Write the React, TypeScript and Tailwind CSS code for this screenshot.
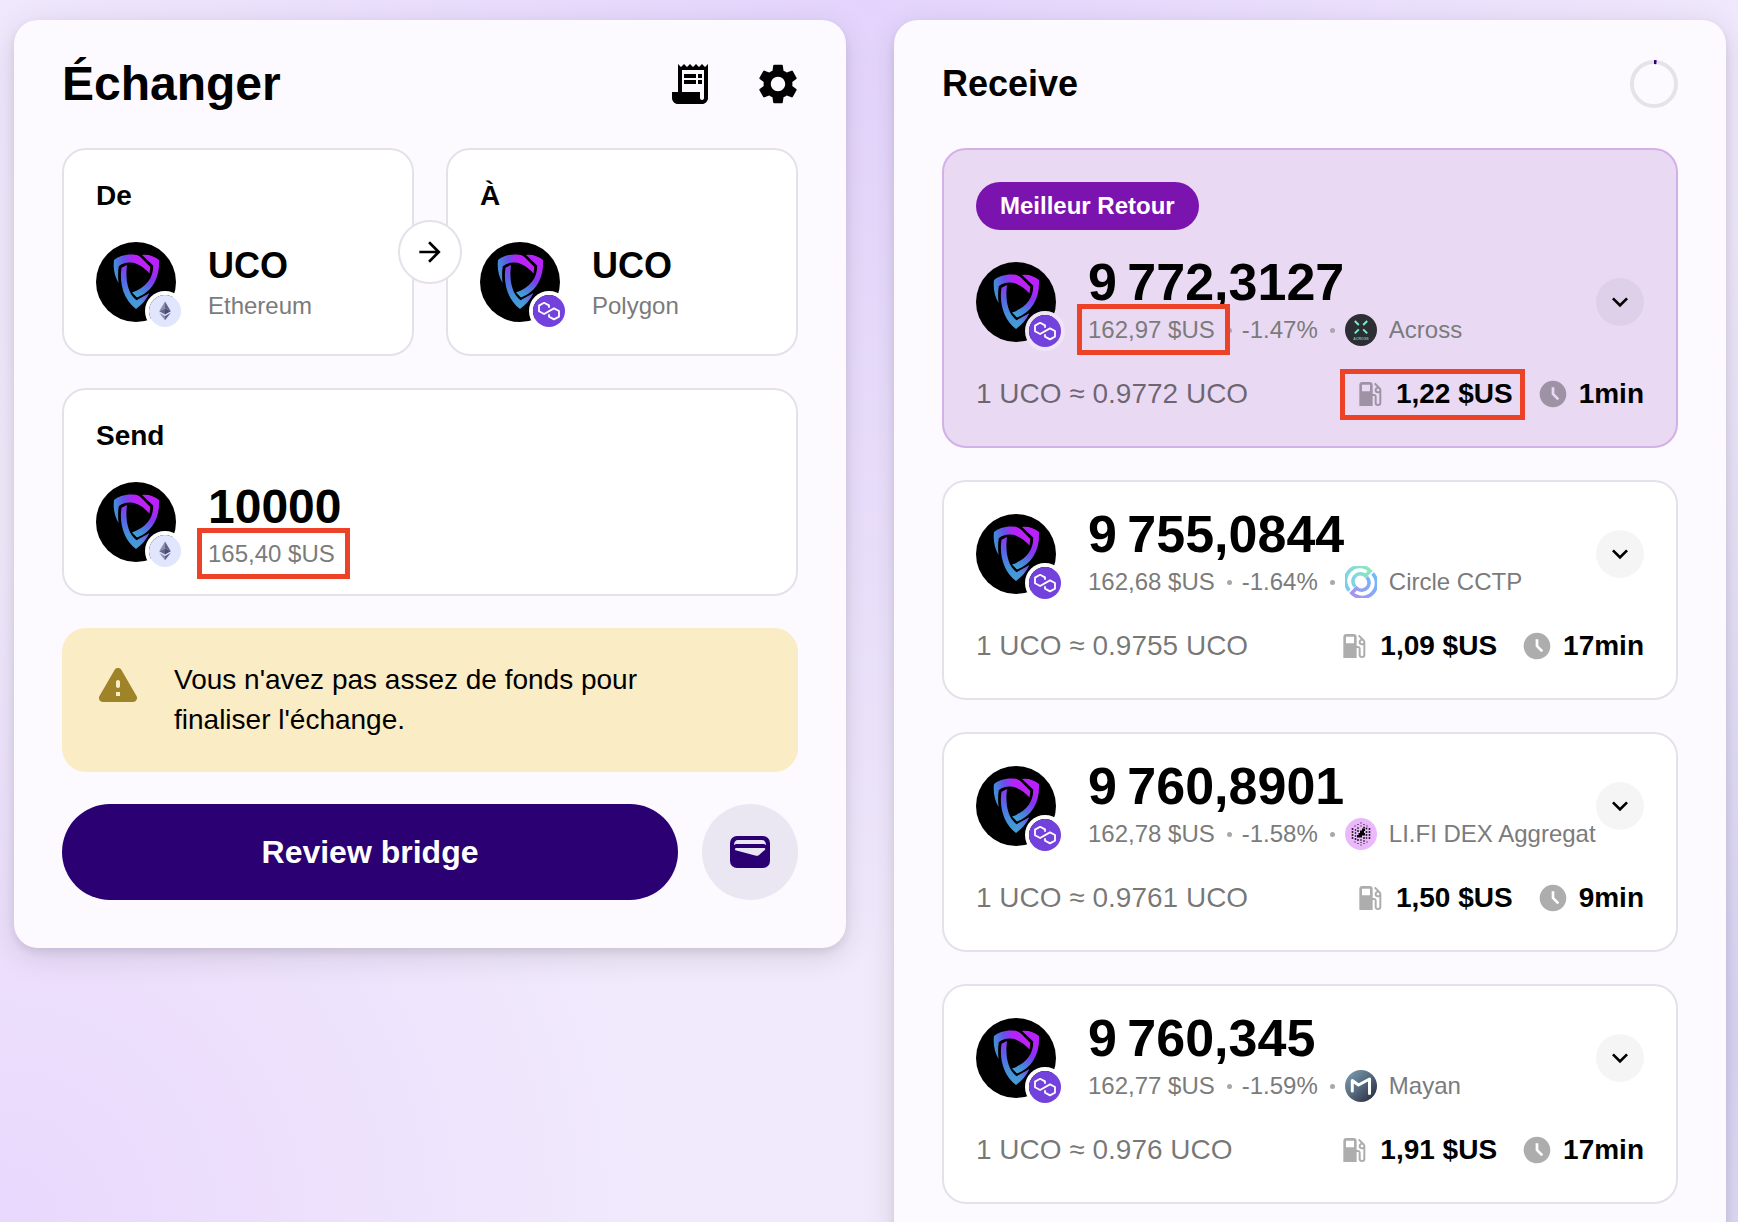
import React, { useState } from "react";
import {
  MdAccessTimeFilled,
  MdArrowForward,
  MdKeyboardArrowDown,
  MdLocalGasStation,
  MdReceiptLong,
  MdSettings,
} from "react-icons/md";

type Network = "ethereum" | "polygon";
type Provider = "across" | "circle" | "lifi" | "mayan";

interface Route {
  amount: string;
  fiat: string;
  change: string;
  provider: Provider;
  name: string;
  rate: string;
  gas: string;
  time: string;
  best?: boolean;
}

const routes: Route[] = [
  { amount: "9\u202f772,3127", fiat: "162,97 $US", change: "-1.47%", provider: "across", name: "Across", rate: "0.9772", gas: "1,22 $US", time: "1min", best: true },
  { amount: "9\u202f755,0844", fiat: "162,68 $US", change: "-1.64%", provider: "circle", name: "Circle CCTP", rate: "0.9755", gas: "1,09 $US", time: "17min" },
  { amount: "9\u202f760,8901", fiat: "162,78 $US", change: "-1.58%", provider: "lifi", name: "LI.FI DEX Aggregator", rate: "0.9761", gas: "1,50 $US", time: "9min" },
  { amount: "9\u202f760,345", fiat: "162,77 $US", change: "-1.59%", provider: "mayan", name: "Mayan", rate: "0.976", gas: "1,91 $US", time: "17min" },
];

function NetworkIcon({ network }: { network: Network }) {
  if (network === "ethereum") {
    return (
      <svg viewBox="0 0 32 32" className="block size-8">
        <circle cx="16" cy="16" r="16" fill="#e1e5fe" />
        <path d="M16 6.5L10.2 16.2 16 13.5z" fill="#8b8fb0" />
        <path d="M16 6.5L21.8 16.2 16 13.5z" fill="#5f6388" />
        <path d="M10.2 16.2L16 13.5V19.6z" fill="#62668f" />
        <path d="M21.8 16.2L16 13.5V19.6z" fill="#454a75" />
        <path d="M10.2 17.7L16 21V25.3z" fill="#8b8fb0" />
        <path d="M21.8 17.7L16 21V25.3z" fill="#5f6388" />
      </svg>
    );
  }
  return (
    <svg viewBox="0 0 32 32" className="block size-8">
      <circle cx="16" cy="16" r="16" fill="#7342dc" />
      <path
        d="M16 12.8V10.4L11.1 7.8L6 10.6V16.2L11.1 19L21 13.4L26 16V21.6L21 24.4L16 21.6V19.2"
        fill="none"
        stroke="#fff"
        strokeWidth="1.8"
        strokeLinejoin="round"
      />
    </svg>
  );
}

function TokenAvatar({ network, best }: { network: Network; best?: boolean }) {
  const id = React.useId();
  return (
    <div className="relative size-20 shrink-0">
      <svg viewBox="0 0 80 80" className="block size-20">
        <defs>
          <linearGradient id={id + "a"} gradientUnits="userSpaceOnUse" x1="17" y1="30" x2="54" y2="24">
            <stop offset="0.05" stopColor="#4292d6" />
            <stop offset="0.35" stopColor="#6650ea" />
            <stop offset="0.6" stopColor="#b822fb" />
            <stop offset="1" stopColor="#bf22f5" />
          </linearGradient>
          <linearGradient id={id + "b"} gradientUnits="userSpaceOnUse" x1="58" y1="16" x2="39" y2="54">
            <stop offset="0.2" stopColor="#b722fa" />
            <stop offset="0.5" stopColor="#8038f2" />
            <stop offset="0.8" stopColor="#4686dc" />
            <stop offset="1" stopColor="#45a4d6" />
          </linearGradient>
          <linearGradient id={id + "c"} gradientUnits="userSpaceOnUse" x1="28" y1="20" x2="38" y2="66">
            <stop offset="0" stopColor="#a02cf5" />
            <stop offset="0.35" stopColor="#5a62e6" />
            <stop offset="0.7" stopColor="#4590da" />
            <stop offset="1" stopColor="#459dd6" />
          </linearGradient>
          <linearGradient id={id + "d"} gradientUnits="userSpaceOnUse" x1="40" y1="62" x2="52" y2="52">
            <stop offset="0" stopColor="#459dd6" stopOpacity="0" />
            <stop offset="1" stopColor="#8a38f0" />
          </linearGradient>
        </defs>
        <circle cx="40" cy="40" r="40" fill="#000" />
        <path d="M18 18C22 14.5 29 12 37 12.5C40.500 12.700 43 13.500 45 15.500L54.300 25L53.500 31.500C48.500 26 42 21 34.500 20.600C30 20.400 26 21.500 22.800 24.200C21.800 30 22 36 22.600 41C18.500 34 17 26 18 18Z" fill={`url(#${id}a)`} />
        <path d="M46 13C52 12 58 14 63 18C64 36 56 50 41 55.500L36 50.500C50 45.500 57.500 36 57.200 23.500Z" fill={`url(#${id}b)`} />
        <path d="M31 23L25.500 25.700C23 42 28 58 40 67C46 62.500 50 58 53 51.500L40.500 58.200C32 52 29 38 31 23Z" fill={`url(#${id}c)`} />
        <path d="M40 67C46 62.500 50 58 53 51.500L40.500 58.200Z" fill={`url(#${id}d)`} />
      </svg>
      <div className={best ? "absolute -bottom-[9px] -right-[9px] rounded-full border-4 border-[#f0e4f7]" : "absolute -bottom-[9px] -right-[9px] rounded-full border-4 border-white"}>
        <NetworkIcon network={network} />
      </div>
    </div>
  );
}

/* Hexagonal dot cluster: [x, y, size] */
const lifiDots: [number, number, number][] = [
  [16, 5, 1], [13, 6.5, 1], [19, 6.5, 1], [10, 8, 1], [22, 8, 1], [16, 8, 1],
  [7.5, 11, 1.6], [24.5, 11, 1.6], [7.5, 14, 1.6], [24.5, 14, 1.6], [7.5, 17, 1.6], [24.5, 17, 1.6], [7.5, 20, 1.6], [24.5, 20, 1.6],
  [10.5, 12, 1.4], [10.5, 15, 1.4], [10.5, 18, 1.4], [10.5, 21, 1.6], [21.5, 10.5, 1.6], [21.5, 14, 1.6], [21.5, 17, 1.6], [21.5, 20, 1.4],
  [13, 10, 1.4], [13, 13, 1.6], [19, 9.5, 1.5], [19, 20, 1.6], [13, 22, 1.6], [16, 22, 1.4], [19, 23, 1.4],
  [10, 24, 1], [22, 24, 1], [13, 25.5, 1], [19, 25.5, 1], [16, 27, 1], [16, 24.5, 1],
];

function ProviderIcon({ provider }: { provider: Provider }) {
  const id = React.useId();
  if (provider === "across") {
    return (
      <svg viewBox="0 0 32 32" className="block size-8 shrink-0">
        <circle cx="16" cy="16" r="16" fill="#2d2e33" />
        <path d="M9.8 7L13.8 11M22.2 7L18.2 11M9.8 19.4L13.8 15.400M22.2 19.4L18.2 15.4" stroke="#70f0cc" strokeWidth="2" />
        <text x="16" y="26" textAnchor="middle" fontSize="3.6" fontWeight="700" fill="#5fc4a8">ACROSS</text>
      </svg>
    );
  }
  if (provider === "circle") {
    return (
      <svg viewBox="0 0 32 32" className="block size-8 shrink-0" fill="none" strokeWidth="3.6">
        <defs>
          <linearGradient id={id + "a"} x1="0" y1="1" x2="1" y2="0">
            <stop offset="0" stopColor="#78c8f5" />
            <stop offset="1" stopColor="#90e8be" />
          </linearGradient>
          <linearGradient id={id + "b"} x1="0" y1="1" x2="1" y2="0">
            <stop offset="0" stopColor="#a892ee" />
            <stop offset="1" stopColor="#6cbcff" />
          </linearGradient>
        </defs>
        <path d="M4.400 24.600A14.200 14.200 0 0 1 25.200 5L20.400 9.800A7.200 7.200 0 0 0 10.300 20.700" stroke={`url(#${id}a)`} />
        <path d="M27.600 7.400A14.200 14.200 0 0 1 6.800 27L11.600 22.200A7.200 7.200 0 0 0 21.700 11.300" stroke={`url(#${id}b)`} />
      </svg>
    );
  }
  if (provider === "lifi") {
    return (
      <svg viewBox="0 0 32 32" className="block size-8 shrink-0">
        <circle cx="16" cy="16" r="16" fill="#ebb9fb" />
        <g fill="#000">
          {lifiDots.map(([x, y, s]) => (
            <rect key={`${x}-${y}`} x={x - s / 2} y={y - s / 2} width={s} height={s} />
          ))}
          <path d="M17 10.5H20V13H19V15H20V17.5H17V19.5H12V17H13.5V15H15V12.5H17Z" />
        </g>
      </svg>
    );
  }
  return (
    <svg viewBox="0 0 32 32" className="block size-8 shrink-0">
      <defs>
        <linearGradient id={id} x1="0.1" y1="0.1" x2="0.9" y2="0.9">
          <stop offset="0" stopColor="#7797ab" />
          <stop offset="0.5" stopColor="#55687c" />
          <stop offset="1" stopColor="#2d2f44" />
        </linearGradient>
      </defs>
      <circle cx="16" cy="16" r="16" fill={`url(#${id})`} />
      <path d="M7.300 21V10.500L13.500 15L24.500 9V23.500" fill="none" stroke="#fff" strokeWidth="3" strokeLinecap="round" strokeLinejoin="round" />
    </svg>
  );
}

function Dot() {
  return <span className="mr-2.5 ml-3 size-[5px] shrink-0 rounded-full bg-[#a9a6ad]" />;
}

function Highlight({ children, className }: { children: React.ReactNode; className: string }) {
  return (
    <div className="relative shrink-0">
      {children}
      <span className={className} />
    </div>
  );
}

const fiatMark = "pointer-events-none absolute -top-2.5 -right-[15px] -bottom-[9px] -left-[11px] z-10 border-[5px] border-[#ec4227]";
const gasMark = "pointer-events-none absolute -top-[5px] -right-3 -bottom-1.5 -left-3.5 z-10 border-[5px] border-[#ec4227]";

const panel =
  "rounded-3xl bg-[#fcfaff] px-12 pt-8 pb-12 shadow-[0_4px_8px_rgba(0,0,0,0.08),0_8px_32px_rgba(0,0,0,0.12)]";

function TokenCard({ label, network, networkName }: { label: string; network: Network; networkName: string }) {
  return (
    <button type="button" className="flex-1 cursor-pointer rounded-3xl border-2 border-[#e5e1eb] bg-white p-8 text-left">
      <span className="block text-[28px]/7 font-bold">{label}</span>
      <span className="mt-8 flex h-20 gap-8">
        <TokenAvatar network={network} />
        <span className="mt-1 block">
          <span className="block text-4xl/10 font-bold">UCO</span>
          <span className="block text-2xl/10 text-[#7b7b7b]">{networkName}</span>
        </span>
      </span>
    </button>
  );
}

function RouteCard({ route }: { route: Route }) {
  const fiat = <span className="block">{route.fiat}</span>;
  const gas = (
    <span className="flex items-center gap-2.5">
      <MdLocalGasStation className="size-8 text-black/32" />
      {route.gas}
    </span>
  );
  return (
    <article
      className={
        route.best
          ? "rounded-3xl border-2 border-[#d3b0e6] bg-[#e9d9f3] p-8"
          : "rounded-3xl border-2 border-[#e5e1eb] bg-white p-8"
      }
    >
      {route.best && (
        <div className="mb-8 flex">
          <span className="rounded-full bg-[#7b14ae] px-6 text-2xl/[48px] font-bold text-white">Meilleur Retour</span>
        </div>
      )}
      <div className="flex h-20 items-center">
        <TokenAvatar network="polygon" best={route.best} />
        <div className="ml-8 min-w-0 flex-1">
          <div className="text-[52px]/[48px] font-bold">{route.amount}</div>
          <div className="mt-2 flex items-center text-2xl/8 whitespace-nowrap text-[#7b7b7b]">
            {route.best ? <Highlight className={fiatMark}>{fiat}</Highlight> : fiat}
            <Dot />
            <span>{route.change}</span>
            <Dot />
            <ProviderIcon provider={route.provider} />
            <span className="ml-3 min-w-0 overflow-hidden">{route.name}</span>
          </div>
        </div>
        <button
          type="button"
          aria-label="Détails"
          className="flex size-12 shrink-0 cursor-pointer items-center justify-center rounded-full bg-black/4"
        >
          <MdKeyboardArrowDown className="size-8" />
        </button>
      </div>
      <div className="mt-8 flex h-10 items-center justify-between text-[28px]/10">
        <span className="text-black/54">1 UCO ≈ {route.rate} UCO</span>
        <div className="flex gap-6 font-bold">
          {route.best ? <Highlight className={gasMark}>{gas}</Highlight> : gas}
          <span className="flex items-center gap-2.5">
            <MdAccessTimeFilled className="size-8 text-black/32" />
            {route.time}
          </span>
        </div>
      </div>
    </article>
  );
}

export default function App() {
  const [amount, setAmount] = useState("10000");
  return (
    <div className="h-screen overflow-hidden bg-[#f1eafc] bg-[radial-gradient(circle_at_50%_0%,#e4d4fd_0%,transparent_65%),radial-gradient(circle_at_0%_100%,#e9d8fd_0%,transparent_32%),radial-gradient(circle_at_100%_85%,#dad5f5_0%,transparent_40%)] font-['Liberation_Sans',Arial,sans-serif] text-black">
      <main className="grid grid-cols-2 items-start gap-12 pt-5 pr-3 pl-3.5">
        <section className={panel}>
          <header className="flex h-16 items-center justify-between">
            <h1 className="text-5xl font-bold">Échanger</h1>
            <div className="-mr-3 flex gap-6">
              <button type="button" aria-label="Historique" className="cursor-pointer p-2">
                <MdReceiptLong className="size-12" />
              </button>
              <button type="button" aria-label="Paramètres" className="cursor-pointer p-2">
                <MdSettings className="size-12" />
              </button>
            </div>
          </header>

          <div className="relative mt-8 flex gap-8">
            <TokenCard label="De" network="ethereum" networkName="Ethereum" />
            <TokenCard label="À" network="polygon" networkName="Polygon" />
            <button
              type="button"
              aria-label="Inverser"
              className="absolute top-1/2 left-1/2 flex size-16 -translate-1/2 cursor-pointer items-center justify-center rounded-full border-2 border-[#e5e1eb] bg-white"
            >
              <MdArrowForward className="size-8" />
            </button>
          </div>

          <div className="mt-8 rounded-3xl border-2 border-[#e5e1eb] bg-white p-8">
            <label htmlFor="send-amount" className="block text-[28px]/7 font-bold">
              Send
            </label>
            <div className="mt-8 flex h-20 gap-8">
              <TokenAvatar network="ethereum" />
              <div className="min-w-0 flex-1">
                <input
                  id="send-amount"
                  inputMode="decimal"
                  value={amount}
                  onChange={(e) => setAmount(e.target.value)}
                  className="block h-12 w-full bg-transparent p-0 text-5xl/[48px] font-bold outline-none"
                />
                <div className="mt-2 flex text-2xl/8 text-[#7b7b7b]">
                  <Highlight className={fiatMark}>165,40 $US</Highlight>
                </div>
              </div>
            </div>
          </div>

          <div role="alert" className="mt-8 flex gap-8 rounded-3xl bg-[#faecc5] p-8">
            <svg viewBox="0 0 24 24" className="size-12 shrink-0" fill="#9e8328">
              <path d="M4.470 21h15.060c1.540 0 2.500-1.670 1.730-3L13.730 4.990c-.770-1.330-2.690-1.330-3.460 0L2.740 18c-.770 1.330.190 3 1.730 3zM12 14c-.550 0-1-.450-1-1v-2c0-.550.450-1 1-1s1 .450 1 1v2c0 .550-.450 1-1 1zm1 4h-2v-2h2v2z" />
            </svg>
            <p className="max-w-[520px] text-[28px]/10">Vous n'avez pas assez de fonds pour finaliser l'échange.</p>
          </div>

          <div className="mt-8 flex gap-6">
            <button type="button" className="h-24 flex-1 cursor-pointer rounded-full bg-[#2a0073] text-[32px] font-bold text-white">
              Review bridge
            </button>
            <button
              type="button"
              aria-label="Portefeuille"
              className="flex size-24 cursor-pointer items-center justify-center rounded-full bg-[#eae7f2]"
            >
              <svg viewBox="0 0 40 32" className="w-10">
                <rect width="40" height="32" rx="7" fill="#2a0073" />
                <path d="M4 9C4 6 5.500 4 8 4H32C34.500 4 36 6 36 9L34 8H6Z" fill="#eae7f2" />
                <path d="M6.500 12H33.500C35.200 12 35.800 13 34.800 13.900L29 19C28 19.800 27 20 26 19.700L5.500 14.300C4.500 13.800 4.800 12 6.500 12Z" fill="#eae7f2" />
              </svg>
            </button>
          </div>
        </section>

        <section className={panel}>
          <header className="flex h-16 items-center justify-between">
            <h2 className="text-4xl font-bold">Receive</h2>
            <svg viewBox="0 0 48 48" className="size-12" fill="none" strokeWidth="4" role="img" aria-label="Actualisation">
              <circle cx="24" cy="24" r="22" stroke="#e5e2ea" />
              <path d="M24 2A22 22 0 0 1 26.500 2.140" stroke="#2a0073" />
            </svg>
          </header>
          <div className="mt-8 flex flex-col gap-8">
            {routes.map((r) => (
              <RouteCard key={r.provider} route={r} />
            ))}
          </div>
        </section>
      </main>
    </div>
  );
}
